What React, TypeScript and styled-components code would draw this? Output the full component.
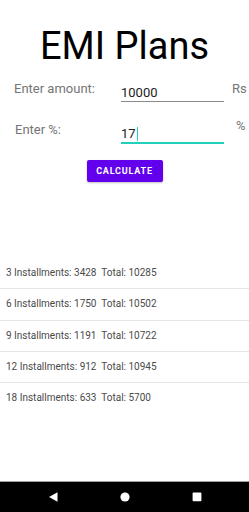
import styled, { createGlobalStyle } from 'styled-components';

const GlobalStyle = createGlobalStyle`
  html, body {
    margin: 0;
    padding: 0;
    background: #ffffff;
  }
  body {
    font-family: Roboto, "Liberation Sans", sans-serif;
  }
`;

const plans = [
  { months: 3, emi: 3428, total: 10285 },
  { months: 6, emi: 1750, total: 10502 },
  { months: 9, emi: 1191, total: 10722 },
  { months: 12, emi: 912, total: 10945 },
  { months: 18, emi: 633, total: 5700 },
];

const App = () => {
  return (
    <>
      <GlobalStyle />
      <Screen>
        <Title>EMI Plans</Title>
        <Form>
          <FormRow>
            <Label>Enter amount:</Label>
            <Field>10000</Field>
            <Unit>Rs</Unit>
          </FormRow>
          <FormRow>
            <Label $indent={1}>Enter %:</Label>
            <Field $focused>
              17
              <Caret />
            </Field>
            <Unit $indent={4} $raise={4}>%</Unit>
          </FormRow>
        </Form>
        <ButtonRow>
          <CalcButton>Calculate</CalcButton>
        </ButtonRow>
        <PlanList>
          {plans.map((plan) => (
            <PlanRow key={plan.months}>
              {`${plan.months} Installments: ${plan.emi}  Total: ${plan.total}`}
            </PlanRow>
          ))}
        </PlanList>
        <NavBar>
          <svg width="10" height="10" viewBox="0 0 10 10">
            <path d="M9.5 0.3 L9.5 9.7 L1 5 Z" fill="#fff" />
          </svg>
          <svg width="10" height="10" viewBox="0 0 10 10">
            <circle cx="5" cy="5" r="4.6" fill="#fff" />
          </svg>
          <svg width="10" height="10" viewBox="0 0 10 10">
            <rect x="0.6" y="0.6" width="8.8" height="8.6" rx="0.8" fill="#fff" />
          </svg>
        </NavBar>
      </Screen>
    </>
  );
};

const Screen = styled.div`
  width: 249px;
  height: 512px;
  display: flex;
  flex-direction: column;
  overflow: hidden;
`;

const Title = styled.h1`
  margin: 24px 0 0;
  font-size: 38px;
  line-height: 45px;
  font-weight: 400;
  color: #000;
  text-align: center;
`;

const Form = styled.div`
  margin-top: 12px;
  display: flex;
  flex-direction: column;
  gap: 21px;
`;

const FormRow = styled.div`
  display: flex;
  align-items: flex-start;
  padding-left: 14px;
  height: 20px;
`;

const Label = styled.div<{ $indent?: number }>`
  width: ${({ $indent = 0 }) => 107 - $indent}px;
  margin-left: ${({ $indent = 0 }) => $indent}px;
  font-size: 13px;
  line-height: 16px;
  color: #757575;
`;

const Field = styled.div<{ $focused?: boolean }>`
  width: 103px;
  margin-top: 4px;
  display: flex;
  align-items: center;
  font-size: 13px;
  line-height: 16px;
  color: #212121;
  border-bottom: ${({ $focused }) => ($focused ? '2px solid #1fd1bb' : '1px solid #8a8a8a')};
`;

const Caret = styled.span`
  display: inline-block;
  width: 1.5px;
  height: 14px;
  margin-left: 1px;
  background: #1fd1bb;
`;

const Unit = styled.div<{ $indent?: number; $raise?: number }>`
  margin-left: ${({ $indent = 0 }) => 8 + $indent}px;
  margin-top: ${({ $raise = 0 }) => -$raise}px;
  font-size: 13px;
  line-height: 16px;
  color: #757575;
`;

const ButtonRow = styled.div`
  margin-top: 18px;
  display: flex;
  justify-content: center;
`;

const CalcButton = styled.button`
  width: 76px;
  height: 22px;
  padding: 0;
  border: none;
  border-radius: 2px;
  background: #6200ee;
  color: #fff;
  font-family: Roboto, "Liberation Sans", sans-serif;
  font-size: 9px;
  font-weight: 700;
  letter-spacing: 0.8px;
  text-transform: uppercase;
  box-shadow: 0 1px 2px rgba(0, 0, 0, 0.25);
`;

const PlanList = styled.div`
  margin-top: 76px;
  display: flex;
  flex-direction: column;
`;

const PlanRow = styled.div`
  height: 30.3px;
  line-height: 30px;
  padding-left: 6px;
  font-size: 10px;
  color: #4a4a4a;
  white-space: pre;
  border-bottom: 1px solid #e6e6e6;

  &:last-child {
    border-bottom: none;
  }
`;

const NavBar = styled.div`
  margin-top: auto;
  height: 30px;
  background: #000;
  border-top: 1px solid #a0a0a0;
  display: flex;
  align-items: center;
  justify-content: center;
  gap: 62px;
`;

export default App;
